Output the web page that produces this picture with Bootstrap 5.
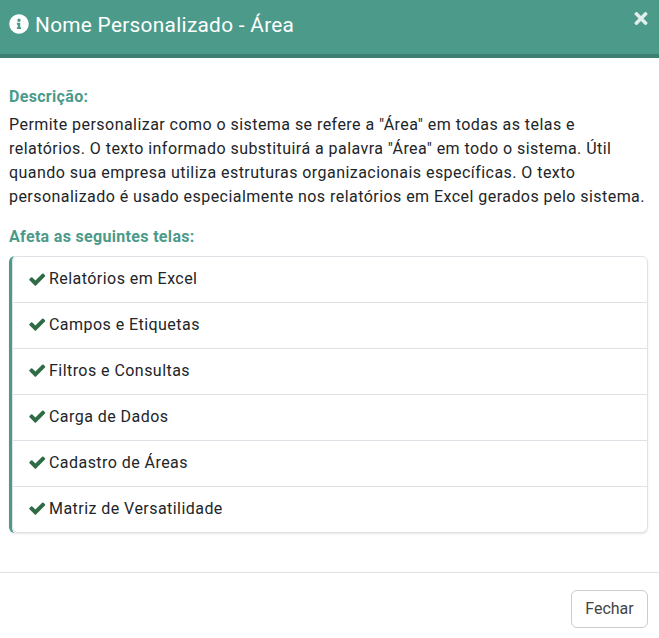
<!DOCTYPE html>
<html lang="pt-br">
<head>
  <meta charset="UTF-8" />
  <title>Nome Personalizado - Área</title>
  <link href="https://cdn.jsdelivr.net/npm/bootstrap@5.3.0/dist/css/bootstrap.min.css" rel="stylesheet" />
  <style>
    body {
      background-color: #fff;
      font-family: Roboto, sans-serif;
      font-size: 16px;
      color: #212529;
      letter-spacing: .45px;
    }
    .cab-modal {
      background-color: #4b9a8a;
      border-bottom: 4px solid #3d7f71;
      height: 58px;
      padding: 0 9px 4px 9px;
      color: #fff;
    }
    .cab-modal h5 {
      font-size: 20.8px;
      font-weight: 400;
      letter-spacing: .3px;
      margin: 0;
    }
    .ico-info { width: 20px; height: 20px; fill: #fff; margin-right: 6px; margin-bottom: 2px; }
    .ico-fechar { width: 14px; height: 19px; fill: #e3efec; position: absolute; top: 9px; right: 11px; }
    .corpo-modal { padding: 27px 11px 0 9px; }
    .titulo-secao { color: #4b9a8a; font-weight: 700; font-size: 16px; line-height: 24px; margin-bottom: 4px; letter-spacing: .32px; }
    .descricao { line-height: 24px; margin-bottom: 16px; }
    .lista-telas { border-left: 3px solid #4b9a8a; box-shadow: 0 1px 2px rgba(0,0,0,.1); margin-top: 7px; }
    .lista-telas .list-group-item { height: 46px; padding: 9px 16px 11px; line-height: 24px; color: #212529; display: flex; align-items: center; }
    .lista-telas .list-group-item:first-child { height: 47px; padding-top: 10px; }
    .ico-check { width: 18.5px; height: 18.5px; fill: #2f6b45; margin-right: 2.5px; margin-left: -1px; flex-shrink: 0; }
    .rodape-modal { margin-top: 39px; border-top: 1px solid #dee2e6; padding: 17px 11px 0 0; }
    .btn-fechar { border: 1px solid #ccc; color: #444; background: #fff; height: 38px; width: 77px; padding: 0; letter-spacing: 0; }
  </style>
</head>
<body class="m-0">
  <div class="cab-modal d-flex align-items-center position-relative">
    <svg class="ico-info" viewBox="0 0 512 512"><path d="M256 8C119.043 8 8 119.083 8 256c0 136.997 111.043 248 248 248s248-111.003 248-248C504 119.083 392.957 8 256 8zm0 110c23.196 0 42 18.804 42 42s-18.804 42-42 42-42-18.804-42-42 18.804-42 42-42zm56 254c0 6.627-5.373 12-12 12h-88c-6.627 0-12-5.373-12-12v-24c0-6.627 5.373-12 12-12h12v-64h-12c-6.627 0-12-5.373-12-12v-24c0-6.627 5.373-12 12-12h64c6.627 0 12 5.373 12 12v100h12c6.627 0 12 5.373 12 12v24z"/></svg>
    <h5>Nome Personalizado - Área</h5>
    <svg class="ico-fechar" viewBox="0 0 352 512"><path d="M242.72 256l100.07-100.07c12.28-12.28 12.28-32.19 0-44.48l-22.24-22.24c-12.28-12.28-32.19-12.28-44.48 0L176 189.28 75.93 89.21c-12.28-12.28-32.19-12.28-44.48 0L9.21 111.45c-12.28 12.28-12.28 32.19 0 44.48L109.28 256 9.21 356.07c-12.28 12.28-12.28 32.19 0 44.48l22.24 22.24c12.28 12.28 32.2 12.28 44.48 0L176 322.72l100.07 100.07c12.28 12.28 32.2 12.28 44.48 0l22.24-22.24c12.28-12.28 12.28-32.19 0-44.48L242.72 256z"/></svg>
  </div>

  <div class="corpo-modal">
    <div class="titulo-secao">Descrição:</div>
    <p class="descricao">Permite personalizar como o sistema se refere a "Área" em todas as telas e relatórios. O texto informado substituirá a palavra "Área" em todo o sistema. Útil quando sua empresa utiliza estruturas organizacionais específicas. O texto personalizado é usado especialmente nos relatórios em Excel gerados pelo sistema.</p>
    <div class="titulo-secao">Afeta as seguintes telas:</div>
    <ul class="list-group lista-telas">
      <li class="list-group-item"><svg class="ico-check" viewBox="0 0 1792 1792"><path d="M1671 566q0 40-28 68l-724 724-136 136q-28 28-68 28t-68-28l-136-136-362-362q-28-28-28-68t28-68l136-136q28-28 68-28t68 28l294 295 656-657q28-28 68-28t68 28l136 136q28 28 28 68z"/></svg>Relatórios em Excel</li>
      <li class="list-group-item"><svg class="ico-check" viewBox="0 0 1792 1792"><path d="M1671 566q0 40-28 68l-724 724-136 136q-28 28-68 28t-68-28l-136-136-362-362q-28-28-28-68t28-68l136-136q28-28 68-28t68 28l294 295 656-657q28-28 68-28t68 28l136 136q28 28 28 68z"/></svg>Campos e Etiquetas</li>
      <li class="list-group-item"><svg class="ico-check" viewBox="0 0 1792 1792"><path d="M1671 566q0 40-28 68l-724 724-136 136q-28 28-68 28t-68-28l-136-136-362-362q-28-28-28-68t28-68l136-136q28-28 68-28t68 28l294 295 656-657q28-28 68-28t68 28l136 136q28 28 28 68z"/></svg>Filtros e Consultas</li>
      <li class="list-group-item"><svg class="ico-check" viewBox="0 0 1792 1792"><path d="M1671 566q0 40-28 68l-724 724-136 136q-28 28-68 28t-68-28l-136-136-362-362q-28-28-28-68t28-68l136-136q28-28 68-28t68 28l294 295 656-657q28-28 68-28t68 28l136 136q28 28 28 68z"/></svg>Carga de Dados</li>
      <li class="list-group-item"><svg class="ico-check" viewBox="0 0 1792 1792"><path d="M1671 566q0 40-28 68l-724 724-136 136q-28 28-68 28t-68-28l-136-136-362-362q-28-28-28-68t28-68l136-136q28-28 68-28t68 28l294 295 656-657q28-28 68-28t68 28l136 136q28 28 28 68z"/></svg>Cadastro de Áreas</li>
      <li class="list-group-item"><svg class="ico-check" viewBox="0 0 1792 1792"><path d="M1671 566q0 40-28 68l-724 724-136 136q-28 28-68 28t-68-28l-136-136-362-362q-28-28-28-68t28-68l136-136q28-28 68-28t68 28l294 295 656-657q28-28 68-28t68 28l136 136q28 28 28 68z"/></svg>Matriz de Versatilidade</li>
    </ul>
  </div>

  <div class="rodape-modal d-flex justify-content-end">
    <button type="button" class="btn btn-fechar">Fechar</button>
  </div>

  <script src="https://cdn.jsdelivr.net/npm/bootstrap@5.3.0/dist/js/bootstrap.bundle.min.js"></script>
</body>
</html>
